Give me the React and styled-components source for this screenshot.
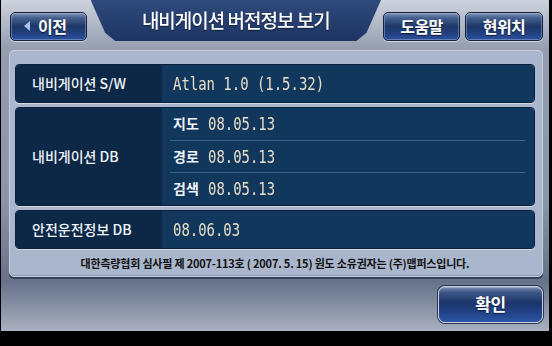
import React from "react";
import styled, { createGlobalStyle } from "styled-components";

const Global = createGlobalStyle`
  html, body { margin: 0; padding: 0; background: #000; }
  body { font-family: "Noto Sans CJK KR", "Noto Sans", sans-serif; }
`;

const Frame = styled.div`
  width: 552px;
  height: 346px;
  background: #000;
  overflow: hidden;
`;

const Screen = styled.div`
  margin-left: 1px;
  width: 548px;
  height: 331px;
  display: flex;
  flex-direction: column;
  background: linear-gradient(
    to bottom,
    #cdd2dc 0px,
    #a9b2c2 30px,
    #939daf 50px,
    #8a95a8 200px,
    #67728a 282px,
    #a9b0bf 331px
  );
`;

const Header = styled.div`
  height: 50px;
  display: flex;
  align-items: flex-start;
  padding: 0 6px 0 9px;
  box-sizing: border-box;
`;

const NavButton = styled.button`
  margin-top: 12px;
  width: ${(p) => p.$w}px;
  height: 29px;
  border: 1px solid #14203d;
  border-radius: 5px;
  box-sizing: border-box;
  display: flex;
  align-items: center;
  justify-content: center;
  gap: 8px;
  padding: 0 0 2px;
  color: #fff;
  font-family: "Noto Sans CJK KR", sans-serif;
  font-weight: 700;
  font-size: 16px;
  letter-spacing: -0.5px;
  background: linear-gradient(
    to bottom,
    #8495b8 0%,
    #45608f 18%,
    #1f3868 48%,
    #213f7e 75%,
    #2c53a0 100%
  );
  box-shadow: inset 0 0 0 1px rgba(200, 215, 240, 0.35),
    0 1px 0 rgba(255, 255, 255, 0.55);
  text-shadow: 0 1px 1px rgba(0, 0, 0, 0.6);
`;

const Triangle = styled.span`
  width: 0;
  height: 0;
  border-top: 5px solid transparent;
  border-bottom: 5px solid transparent;
  border-right: 6px solid #a9c3ee;
  margin-left: -6px;
`;

const TitleTab = styled.div`
  margin-left: 4px;
  margin-right: 2px;
  width: 292px;
  height: 41px;
  display: flex;
  align-items: center;
  justify-content: center;
  padding-bottom: 2px;
  box-sizing: border-box;
  color: #fff;
  font-size: 19px;
  font-weight: 500;
  letter-spacing: -1px;
  background: linear-gradient(to bottom, #2e4a7c 0%, #243d6c 60%, #1d3463 100%);
  clip-path: polygon(0 0, 100% 0, 95% 80%, 91.5% 100%, 8.5% 100%, 5% 80%);
  filter: drop-shadow(0 1px 0 #e8edf5);
  text-shadow: 0 1px 1px rgba(0, 0, 0, 0.5);
`;

const RightButtons = styled.div`
  display: flex;
  gap: 5px;
`;

const Panel = styled.div`
  margin: 0 6px 0 8px;
  height: 227px;
  box-sizing: border-box;
  border-radius: 5px;
  background: #a9b6cb;
  border: 1px solid #c6d0de;
  box-shadow: 0 2px 0 #33405a, inset 0 -1px 0 #8d9ab0;
  padding: 13px 7px 0 5px;
  display: flex;
  flex-direction: column;
  gap: 4px;
`;

const Row = styled.div`
  display: flex;
  height: ${(p) => p.$h}px;
  border-radius: 4px;
  overflow: hidden;
  border: 1px solid #0a203b;
  box-sizing: border-box;
  box-shadow: 0 1px 0 #d0d8e4;
`;

const Label = styled.div`
  width: 146px;
  flex-shrink: 0;
  background: #0c2846;
  color: #eef3f9;
  font-size: 14px;
  font-weight: 500;
  display: flex;
  align-items: center;
  padding-left: 16px;
  box-sizing: border-box;
  padding-bottom: 2px;
`;

const Value = styled.div`
  flex: 1;
  background: #12375c;
  display: flex;
  flex-direction: column;
  padding: 0 9px 0 8px;
`;

const SubRow = styled.div`
  flex: 1;
  display: flex;
  align-items: center;
  gap: 9px;
  padding-left: 3px;
  border-top: ${(p) => (p.$first ? "none" : "1px solid #3d6388")};
`;

const SubLabel = styled.span`
  color: #eef3f9;
  font-weight: 700;
  font-size: 14px;
  padding-bottom: 2px;
`;

const Mono = styled.span`
  display: inline-block;
  font-family: "DejaVu Sans Mono", "Liberation Mono", monospace;
  font-size: 17px;
  color: #e9dfc9;
  transform: scaleX(0.82);
  transform-origin: left center;
  white-space: nowrap;
`;

const Footer = styled.div`
  flex: 1;
  display: flex;
  align-items: center;
  justify-content: center;
  font-size: 11px;
  font-weight: 700;
  color: #111;
  letter-spacing: -0.2px;
  padding-bottom: 3px;
`;

const Bottom = styled.div`
  flex: 1;
  display: flex;
  justify-content: flex-end;
  align-items: flex-start;
  padding: 9px 6px 0 0;
`;

const ConfirmButton = styled(NavButton)`
  margin-top: 0;
  height: 37px;
  border-radius: 7px;
  font-size: 17px;
  border: 1px solid #c9d1e0;
  box-shadow: 0 0 0 1px #2a3550, inset 0 1px 0 rgba(255, 255, 255, 0.25);
  background: linear-gradient(
    to bottom,
    #7e8fb2 0%,
    #3c5586 16%,
    #1c346a 45%,
    #22438a 75%,
    #2d56a6 100%
  );
`;

export default function App() {
  return (
    <Frame>
      <Global />
      <Screen>
        <Header>
          <NavButton $w={77}>
            <Triangle />
            이전
          </NavButton>
          <TitleTab>내비게이션 버전정보 보기</TitleTab>
          <RightButtons>
            <NavButton $w={77}>도움말</NavButton>
            <NavButton $w={78}>현위치</NavButton>
          </RightButtons>
        </Header>
        <Panel>
          <Row $h={39}>
            <Label>내비게이션 S/W</Label>
            <Value>
              <SubRow $first>
                <Mono>Atlan 1.0 (1.5.32)</Mono>
              </SubRow>
            </Value>
          </Row>
          <Row $h={99}>
            <Label>내비게이션 DB</Label>
            <Value>
              <SubRow $first>
                <SubLabel>지도</SubLabel>
                <Mono>08.05.13</Mono>
              </SubRow>
              <SubRow>
                <SubLabel>경로</SubLabel>
                <Mono>08.05.13</Mono>
              </SubRow>
              <SubRow>
                <SubLabel>검색</SubLabel>
                <Mono>08.05.13</Mono>
              </SubRow>
            </Value>
          </Row>
          <Row $h={39}>
            <Label>안전운전정보 DB</Label>
            <Value>
              <SubRow $first>
                <Mono>08.06.03</Mono>
              </SubRow>
            </Value>
          </Row>
          <Footer>
            대한측량협회 심사필 제 2007-113호 ( 2007. 5. 15) 원도 소유권자는 (주)맵퍼스입니다.
          </Footer>
        </Panel>
        <Bottom>
          <ConfirmButton $w={105}>확인</ConfirmButton>
        </Bottom>
      </Screen>
    </Frame>
  );
}
